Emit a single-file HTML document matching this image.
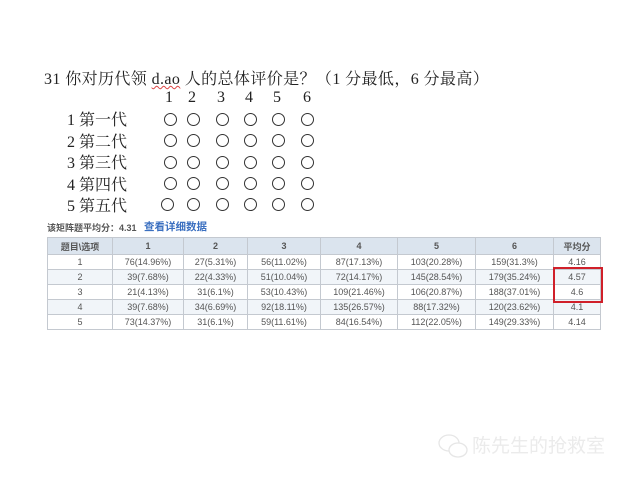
<!DOCTYPE html>
<html><head><meta charset="utf-8"><style>
body{margin:0;width:640px;height:480px;background:#fff;position:relative;overflow:hidden;font-family:"Liberation Serif","Noto Serif CJK SC",serif;color:#222}
.a{position:absolute;white-space:nowrap}
.t{font-size:16px}
.n{position:absolute;top:89px;font-size:16px;width:10px;text-align:center}
.c{position:absolute;width:11px;height:11px;border:1.3px solid #333;border-radius:50%}
table{position:absolute;left:47px;top:237px;border-collapse:collapse;font-family:"Liberation Sans","Noto Sans CJK SC",sans-serif;font-size:9px;color:#555}
td{border:1px solid #c4c9d0;height:14px;text-align:center;padding:0}
tr.h td{background:#dbe4ee;height:16px;font-weight:bold;color:#555}
tr.s td{background:#f1f5f9}
</style></head><body>
<div class="a t" style="left:44px;top:66px;letter-spacing:0.4px">31 你对历代领 <span style="text-decoration:underline wavy #d44;text-decoration-thickness:1px">d.ao</span> 人的总体评价是？（1 分最低，6 分最高）</div>
<div class="n" style="left:164px">1</div><div class="n" style="left:187px">2</div><div class="n" style="left:216px">3</div><div class="n" style="left:244px">4</div><div class="n" style="left:272px">5</div><div class="n" style="left:302px">6</div>
<div class="a t" style="left:67px;top:110px;line-height:21.5px">1 第一代<br>2 第二代<br>3 第三代<br>4 第四代<br>5 第五代</div>
<div id="cs"></div>
<script>
var xs=[164,187,216,244,272,301],ys=[113,134,156,177,198],h='';
ys.forEach(function(y,i){xs.forEach(function(x){h+='<div class="c" style="left:'+(i==4&&x==164?161:x)+'px;top:'+y+'px"></div>'})});
document.getElementById('cs').innerHTML=h;
</script>
<div class="a" style="left:47px;top:221px;font-family:'Liberation Sans','Noto Sans CJK SC',sans-serif;font-size:9px;font-weight:bold;color:#555">该矩阵题平均分：4.31</div>
<div class="a" style="left:144px;top:219px;font-family:'Liberation Sans','Noto Sans CJK SC',sans-serif;font-size:10.5px;font-weight:bold;color:#3a6fc0">查看详细数据</div>
<table>
<colgroup><col style="width:65px"><col style="width:71px"><col style="width:64px"><col style="width:73px"><col style="width:77px"><col style="width:78px"><col style="width:78px"><col style="width:47px"></colgroup>
<tr class="h"><td>题目\选项</td><td>1</td><td>2</td><td>3</td><td>4</td><td>5</td><td>6</td><td>平均分</td></tr>
<tr><td>1</td><td>76(14.96%)</td><td>27(5.31%)</td><td>56(11.02%)</td><td>87(17.13%)</td><td>103(20.28%)</td><td>159(31.3%)</td><td>4.16</td></tr>
<tr class="s"><td>2</td><td>39(7.68%)</td><td>22(4.33%)</td><td>51(10.04%)</td><td>72(14.17%)</td><td>145(28.54%)</td><td>179(35.24%)</td><td>4.57</td></tr>
<tr><td>3</td><td>21(4.13%)</td><td>31(6.1%)</td><td>53(10.43%)</td><td>109(21.46%)</td><td>106(20.87%)</td><td>188(37.01%)</td><td>4.6</td></tr>
<tr class="s"><td>4</td><td>39(7.68%)</td><td>34(6.69%)</td><td>92(18.11%)</td><td>135(26.57%)</td><td>88(17.32%)</td><td>120(23.62%)</td><td>4.1</td></tr>
<tr><td>5</td><td>73(14.37%)</td><td>31(6.1%)</td><td>59(11.61%)</td><td>84(16.54%)</td><td>112(22.05%)</td><td>149(29.33%)</td><td>4.14</td></tr>
</table>
<div class="a" style="left:553px;top:267px;width:46px;height:32px;border:2px solid #d0202a"></div>
<svg class="a" style="left:436px;top:432px" width="36" height="30"><g fill="none" stroke="#e6e6e6" stroke-width="1.3"><ellipse cx="13" cy="11" rx="10" ry="8"/><ellipse cx="22" cy="18" rx="9" ry="7" fill="#fff"/></g></svg>
<div class="a" style="left:472px;top:431px;font-family:'Liberation Sans','Noto Sans CJK SC',sans-serif;font-size:19px;color:#ebebeb">陈先生的抢救室</div>
</body></html>
